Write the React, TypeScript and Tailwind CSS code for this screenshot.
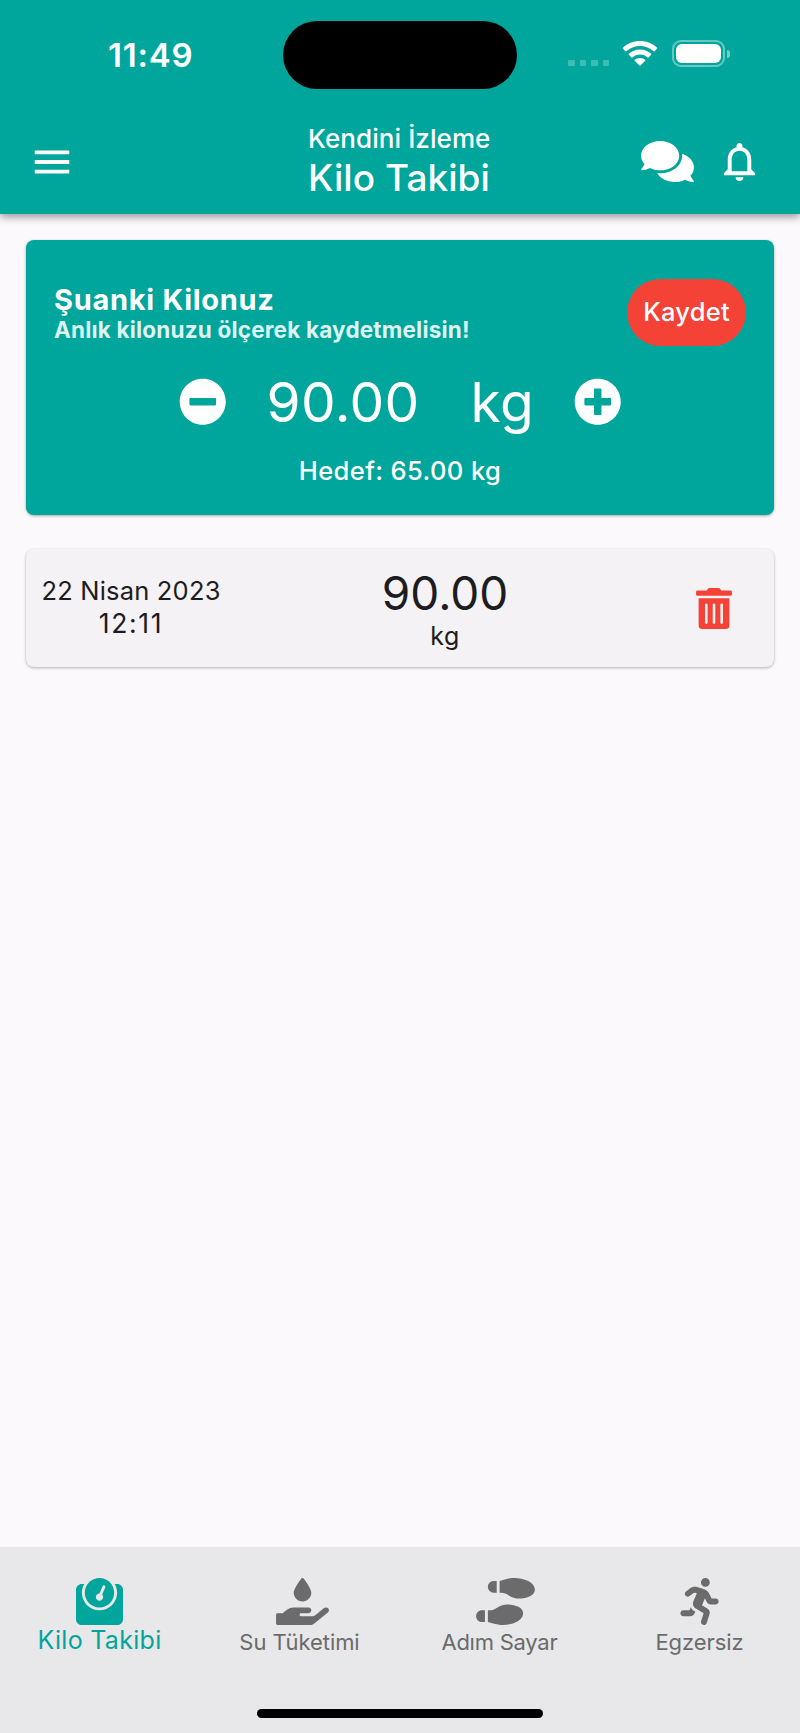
import React from "react";
import {
  FaComments,
  FaHandHoldingWater,
  FaMinusCircle,
  FaPlusCircle,
  FaRunning,
  FaShoePrints,
  FaTrashAlt,
  FaWeight,
} from "react-icons/fa";
import { MdMenu, MdNotificationsNone } from "react-icons/md";
import { clsx } from "clsx";

interface WeightEntry {
  date: string;
  time: string;
  weight: string;
}

const entries: WeightEntry[] = [
  { date: "22 Nisan 2023", time: "12:11", weight: "90.00" },
];

const tabs = [
  {
    label: "Kilo Takibi",
    icon: <FaWeight className="h-[47px] w-[47px] shrink-0" />,
    className: "tracking-[0.3px]",
  },
  {
    label: "Su Tüketimi",
    icon: <FaHandHoldingWater className="h-[47px] w-[53px] shrink-0" />,
    className: "tracking-[-0.06px]",
  },
  {
    label: "Adım Sayar",
    icon: <FaShoePrints className="h-[47px] w-[59px] shrink-0" />,
    className: "tracking-[-0.24px]",
  },
  {
    label: "Egzersiz",
    icon: <FaRunning className="h-[47px] w-[47px] shrink-0" />,
    className: "tracking-[-0.08px]",
  },
];

const StatusBar = () => (
  <div className="flex h-[109px] pl-[108px] text-white">
    <span className="mt-[35px] w-[175px] text-[33px] leading-[40px] font-semibold tracking-[0.75px]">
      11:49
    </span>
    <div className="mt-[21px] h-[68px] w-[234px] rounded-full bg-black" />
    {/* Signal */}
    <div className="mt-[60px] ml-[51px] flex gap-[5px]">
      {[0, 1, 2, 3].map((dot) => (
        <span
          key={dot}
          className="h-[6px] w-[6.5px] rounded-[1px] bg-white/25"
        />
      ))}
    </div>
    {/* Wifi */}
    <svg
      className="mt-[40px] ml-[13px] h-[27px] w-[36px]"
      viewBox="0 0 37 27"
      fill="currentColor"
    >
      <path d="M18.5 0.7C11.7 0.7 5.5 3.3 0.9 7.5c-0.3 0.3-0.3 0.7 0 1l2.7 2.7c0.3 0.3 0.7 0.3 1 0C8.3 7.9 13.2 5.9 18.5 5.9s10.2 2 13.9 5.3c0.3 0.3 0.7 0.3 1 0l2.7-2.7c0.3-0.3 0.3-0.7 0-1C31.5 3.3 25.3 0.7 18.5 0.7z" />
      <path d="M18.5 9.3c-4.4 0-8.5 1.7-11.5 4.5-0.3 0.3-0.3 0.7 0 1l2.7 2.7c0.3 0.3 0.7 0.3 1 0 2.1-1.9 4.8-3 7.8-3s5.7 1.1 7.8 3c0.3 0.3 0.7 0.3 1 0l2.7-2.7c0.3-0.3 0.3-0.7 0-1-3-2.8-7.1-4.5-11.5-4.5z" />
      <path d="M18.5 18c-2.1 0-3.9 0.7-5.4 1.9-0.3 0.3-0.3 0.7 0 1l4.8 4.9c0.3 0.3 0.8 0.3 1.1 0l4.8-4.9c0.3-0.3 0.3-0.7 0-1C22.4 18.7 20.6 18 18.5 18z" />
    </svg>
    {/* Battery */}
    <div className="mt-[40px] ml-[14px] h-[27px] w-[53px] rounded-[9px] border-[2px] border-white/40 p-[2px]">
      <div className="h-full rounded-[6px] bg-white" />
    </div>
    <div className="mt-[50px] ml-[2px] h-[8px] w-[3px] rounded-r-full bg-white/45" />
  </div>
);

const Header = () => (
  <header className="relative h-[213.5px] shrink-0 bg-[#00a69c] shadow-[0_3px_8px_rgba(0,0,0,0.4)]">
    <StatusBar />
    <div className="grid h-[105px] grid-cols-[200px_400px_200px] items-center text-white">
      <MdMenu className="ml-[29px] h-[46px] w-[46px]" />
      <div className="pt-[2px] pl-[108px]">
        <p className="text-[26px] leading-[30px] font-medium tracking-[0.08px]">
          Kendini İzleme
        </p>
        <h1 className="text-[37px] leading-[47px] font-medium tracking-[0.04px] whitespace-nowrap">
          Kilo Takibi
        </h1>
      </div>
      <div className="flex items-center pl-[41px]">
        <FaComments className="h-[47px] w-[53px]" />
        <MdNotificationsNone className="ml-[21.5px] h-[47px] w-[47px]" />
      </div>
    </div>
  </header>
);

const CurrentWeightCard = () => (
  <section className="h-[275px] rounded-lg bg-[#00a69c] pt-[39px] text-white shadow-[0_1px_3px_rgba(0,0,0,0.35)]">
    <div className="flex items-center justify-between pr-[28px] pl-[28px]">
      <div>
        <h2 className="text-[29px] leading-[34px] font-bold tracking-[0.7px]">
          Şuanki Kilonuz
        </h2>
        <p className="text-[22.5px] leading-[26px] font-bold tracking-[0.19px] text-[#dcf3f1]">
          Anlık kilonuzu ölçerek kaydetmelisin!
        </p>
      </div>
      <button className="h-[67px] w-[119px] rounded-full bg-[#f44336] pb-px text-[25.5px] leading-[30px] font-medium tracking-[0.25px]">
        Kaydet
      </button>
    </div>

    <div className="mt-[32px] flex h-[47px] items-center pl-[153px]">
      <FaMinusCircle className="h-[47.5px] w-[47.5px]" />
      <span className="ml-[40px] w-[204px] pt-[2px] text-[55px] leading-none tracking-[0.36px]">
        90.00
      </span>
      <span className="w-[103px] pt-[2px] text-[55px] leading-none tracking-[0.6px]">
        kg
      </span>
      <FaPlusCircle className="h-[47.5px] w-[47.5px]" />
    </div>

    <p className="mt-[31px] text-center text-[25.5px] leading-[30px] font-medium tracking-[0.4px]">
      Hedef: 65.00 kg
    </p>
  </section>
);

const WeightEntryCard: React.FC<{ entry: WeightEntry }> = ({ entry }) => (
  <section className="grid h-[118px] grid-cols-[210px_418px_120px] items-center justify-items-center rounded-lg bg-[#f4f2f5] text-[#1d1c1f] shadow-[0_1px_3px_rgba(0,0,0,0.3)]">
    <div className="pb-[2px] text-center">
      <p className="text-[25.5px] leading-[33px] tracking-[0.2px]">
        {entry.date}
      </p>
      <p className="text-[26.5px] leading-[33px] tracking-[1.7px]">
        {entry.time}
      </p>
    </div>
    <div className="text-center">
      <p className="text-[46px] leading-[55px]">{entry.weight}</p>
      <p className="text-[25px] leading-[30px] tracking-[0.5px]">kg</p>
    </div>
    <FaTrashAlt className="h-[41px] w-[36px] text-[#f44336]" />
  </section>
);

const TabBar = () => (
  <nav className="flex h-[186px] shrink-0 flex-col items-center justify-between bg-[#e8e7e9] pt-[31px] pb-[15px]">
    <div className="grid w-full grid-cols-4">
      {tabs.map((tab, i) => (
        <div
          key={tab.label}
          className={clsx(
            "flex flex-col items-center pr-px",
            i === 0 ? "text-[#00a69c]" : "text-[#6b6b6b]"
          )}
        >
          <div className="flex w-[47px]">{tab.icon}</div>
          <span
            className={clsx(
              i === 0
                ? "text-[25px] leading-[31px]"
                : "mt-[3px] text-[22px] leading-[29px]",
              tab.className
            )}
          >
            {tab.label}
          </span>
        </div>
      ))}
    </div>
    {/* Home indicator */}
    <div className="h-[9px] w-[286px] rounded-full bg-black" />
  </nav>
);

export default function App() {
  return (
    <div className="flex h-[1733px] w-[800px] flex-col bg-[#fcf9fd] font-['Inter',sans-serif]">
      <Header />
      <main className="flex flex-1 flex-col gap-[34px] px-[26px] pt-[26.5px]">
        <CurrentWeightCard />
        {entries.map((entry) => (
          <WeightEntryCard key={entry.date + entry.time} entry={entry} />
        ))}
      </main>
      <TabBar />
    </div>
  );
}
